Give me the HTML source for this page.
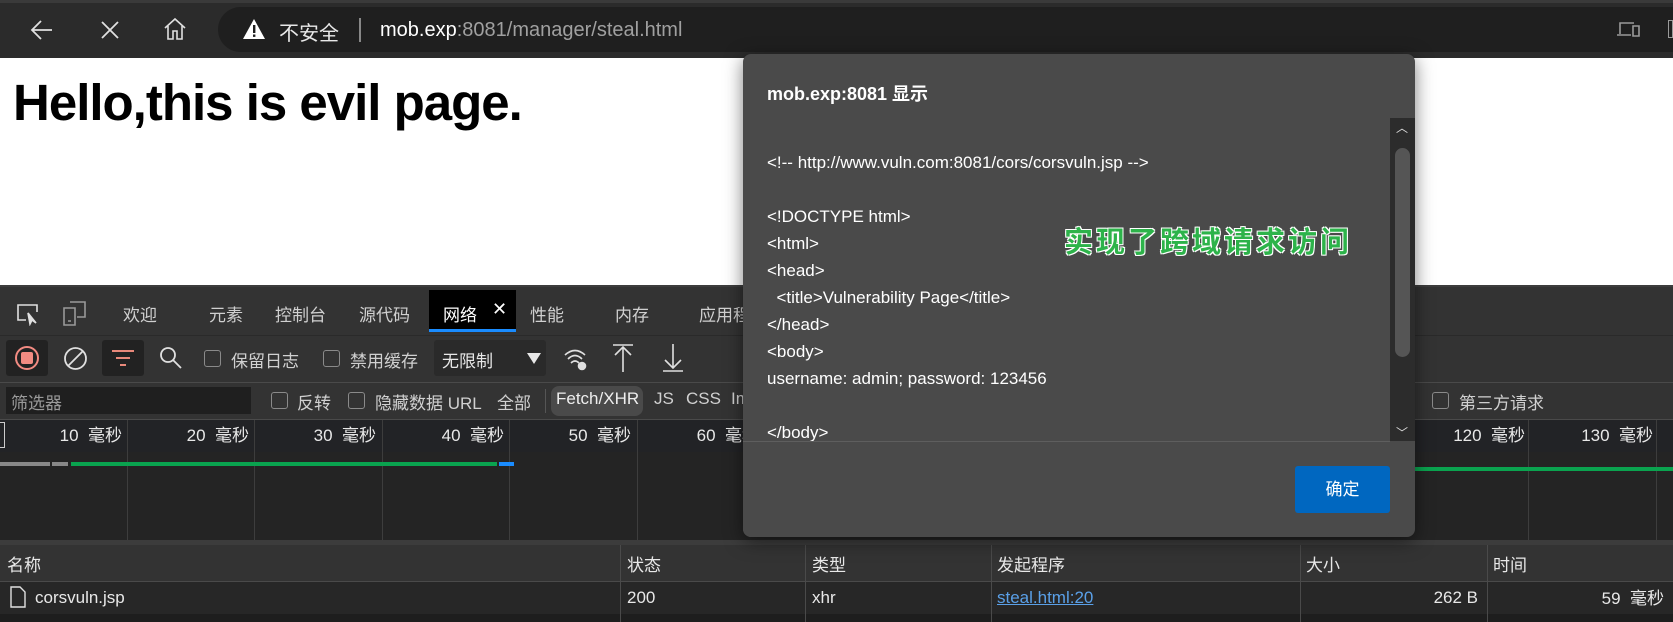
<!DOCTYPE html>
<html><head><meta charset="utf-8"><style>
*{box-sizing:border-box;margin:0;padding:0}
body{width:1673px;height:622px;overflow:hidden;position:relative;background:#fff;font-family:"Liberation Sans","Noto Sans CJK SC",sans-serif;}
.a{position:absolute;white-space:nowrap}
.dt{color:#d0d0d0;font-size:17px}
.cb{position:absolute;width:17px;height:17px;border:1.5px solid #8a8a8a;border-radius:3px}
.vl{position:absolute;width:1px;background:#3d3d3d}
.lbl{position:absolute;top:420px;height:32px;line-height:32px;color:#e8e8e8;font-size:17px;text-align:right;width:120px;white-space:pre}
</style></head><body>
<div class="a" style="left:0;top:0;width:1673px;height:58px;background:#2b2b2b;border-top:3px solid #3a3a3a"></div>
<div class="a" style="left:218px;top:7px;width:1500px;height:45px;background:#1f1f1f;border-radius:23px"></div>
<svg class="a" style="left:28px;top:16px" width="28" height="28" viewBox="0 0 28 28" fill="none" stroke="#e0e0e0" stroke-width="1.8"><path d="M4 14H24M13 5L4 14L13 23"/></svg>
<svg class="a" style="left:98px;top:18px" width="24" height="24" viewBox="0 0 24 24" fill="none" stroke="#e0e0e0" stroke-width="1.8"><path d="M4 4L20 20M20 4L4 20"/></svg>
<svg class="a" style="left:162px;top:16px" width="26" height="26" viewBox="0 0 26 26" fill="none" stroke="#e0e0e0" stroke-width="1.6"><path d="M3 12L13 3L23 12M6 10V23H11V15H15V23H20V10"/></svg>
<svg class="a" style="left:242px;top:18px" width="24" height="22" viewBox="0 0 24 22"><path d="M12 1L23 21H1Z" fill="#fff"/><rect x="11" y="7" width="2.4" height="8" fill="#1f1f1f"/><rect x="11" y="16.5" width="2.4" height="2.4" fill="#1f1f1f"/></svg>
<div class="a" style="left:279px;top:17px;font-size:20px;color:#e8e8e8">不安全</div>
<div class="a" style="left:359px;top:18px;width:2px;height:24px;background:#888"></div>
<div class="a" style="left:380px;top:19px;font-size:20px;color:#fff">mob.exp<span style="color:#a0a0a0">:8081/manager/steal.html</span></div>
<svg class="a" style="left:1617px;top:20px" width="24" height="18" viewBox="0 0 24 18" fill="none" stroke="#9a9a9a" stroke-width="1.6"><path d="M3 14V3H17M0 15H14M16 6H22V16H16Z"/></svg>
<div class="a" style="left:1668px;top:20px;width:5px;height:18px;border:1.5px solid #9a9a9a"></div>
<div class="a" style="left:13px;top:73px;font-size:51px;font-weight:bold;color:#000;letter-spacing:-1px">Hello,this is evil page.</div>
<div class="a" style="left:0;top:285px;width:1673px;height:337px;background:#1e1e1e"></div>
<div class="a" style="left:0;top:285px;width:1673px;height:50px;background:#333;border-top:2px solid #3d3d3d"></div>
<svg class="a" style="left:15px;top:302px" width="25" height="24" viewBox="0 0 25 24" fill="none" stroke="#e0e0e0" stroke-width="1.6"><path d="M11 18H3V3H22V10"/><path d="M13 11L15 22L17 18L21 21Z" fill="#e0e0e0"/></svg>
<svg class="a" style="left:63px;top:300px" width="24" height="26" viewBox="0 0 24 26" fill="none" stroke="#999" stroke-width="1.6"><path d="M7 2H22V17H14M1 8H12V25H1ZM5 21H8"/></svg>
<div class="a dt" style="left:123px;top:301px">欢迎</div>
<div class="a dt" style="left:209px;top:301px">元素</div>
<div class="a dt" style="left:275px;top:301px">控制台</div>
<div class="a dt" style="left:359px;top:301px">源代码</div>
<div class="a" style="left:429px;top:290px;width:87px;height:42px;background:#000;border-bottom:3px solid #1a8cff"></div>
<div class="a dt" style="left:443px;top:301px;color:#fff">网络</div>
<div class="a" style="left:492px;top:299px;color:#fff;font-size:18px">✕</div>
<div class="a dt" style="left:530px;top:301px">性能</div>
<div class="a dt" style="left:615px;top:301px">内存</div>
<div class="a dt" style="left:699px;top:301px">应用程序</div>
<div class="a" style="left:0;top:335px;width:1673px;height:48px;background:#333;border-top:1px solid #2a2a2a;border-bottom:1px solid #4a4a4a"></div>
<div class="a" style="left:6px;top:340px;width:42px;height:36px;background:#222;border-radius:3px"></div>
<div class="a" style="left:15px;top:346px;width:24px;height:24px;border:2px solid #f28b82;border-radius:50%"></div>
<div class="a" style="left:21px;top:352px;width:12px;height:12px;background:#f28b82;border-radius:2px"></div>
<svg class="a" style="left:63px;top:346px" width="25" height="25" viewBox="0 0 25 25" fill="none" stroke="#e0e0e0" stroke-width="1.8"><circle cx="12.5" cy="12.5" r="10.5"/><path d="M5 20L20 5"/></svg>
<div class="a" style="left:102px;top:340px;width:42px;height:36px;background:#222;border-radius:3px"></div>
<div class="a" style="left:112px;top:350px;width:22px;height:2px;background:#e8887a"></div>
<div class="a" style="left:116px;top:357px;width:14px;height:2px;background:#e8887a"></div>
<div class="a" style="left:120px;top:364px;width:6px;height:2px;background:#e8887a"></div>
<svg class="a" style="left:159px;top:346px" width="24" height="24" viewBox="0 0 24 24" fill="none" stroke="#e0e0e0" stroke-width="1.8"><circle cx="9" cy="9" r="7"/><path d="M14 14L22 22"/></svg>
<div class="cb" style="left:204px;top:350px"></div>
<div class="a dt" style="left:231px;top:347px">保留日志</div>
<div class="cb" style="left:323px;top:350px"></div>
<div class="a dt" style="left:350px;top:347px">禁用缓存</div>
<div class="a" style="left:434px;top:340px;width:112px;height:36px;background:#2a2a2a;border-radius:3px"></div>
<div class="a dt" style="left:442px;top:347px;color:#e8e8e8">无限制</div>
<div class="a" style="left:527px;top:353px;border-left:7px solid transparent;border-right:7px solid transparent;border-top:11px solid #e8e8e8"></div>
<svg class="a" style="left:563px;top:346px" width="26" height="26" viewBox="0 0 26 26" fill="none" stroke="#e0e0e0" stroke-width="1.6"><path d="M2 9Q12 0 22 9M5 13Q12 6 19 13M8 17Q12 13 16 17"/><circle cx="19" cy="20" r="3.5" fill="#e0e0e0"/></svg>
<svg class="a" style="left:612px;top:343px" width="22" height="30" viewBox="0 0 22 30" fill="none" stroke="#e0e0e0" stroke-width="1.6"><path d="M1 2H21M11 4V29M3 12L11 4L19 12"/></svg>
<svg class="a" style="left:662px;top:343px" width="22" height="30" viewBox="0 0 22 30" fill="none" stroke="#e0e0e0" stroke-width="1.6"><path d="M1 28H21M11 1V25M3 17L11 25L19 17"/></svg>
<div class="a" style="left:0;top:383px;width:1673px;height:37px;background:#333;border-bottom:1px solid #4a4a4a"></div>
<div class="a" style="left:6px;top:387px;width:245px;height:27px;background:#1f1f1f"></div>
<div class="a" style="left:11px;top:389px;font-size:17px;color:#999">筛选器</div>
<div class="cb" style="left:271px;top:392px"></div>
<div class="a dt" style="left:297px;top:389px">反转</div>
<div class="cb" style="left:348px;top:392px"></div>
<div class="a dt" style="left:375px;top:389px">隐藏数据 URL</div>
<div class="a dt" style="left:497px;top:389px">全部</div>
<div class="a" style="left:545px;top:389px;width:1px;height:24px;background:#555"></div>
<div class="a" style="left:551px;top:386px;width:92px;height:30px;background:#4a4a4a;border-radius:8px"></div>
<div class="a dt" style="left:556px;top:389px;color:#eee">Fetch/XHR</div>
<div class="a dt" style="left:654px;top:389px">JS</div>
<div class="a dt" style="left:686px;top:389px">CSS</div>
<div class="a dt" style="left:731px;top:389px">Img</div>
<div class="cb" style="left:1432px;top:392px"></div>
<div class="a dt" style="left:1459px;top:389px">第三方请求</div>
<div class="a" style="left:0;top:420px;width:1673px;height:32px;background:#222326"></div>
<div class="a" style="left:0;top:452px;width:1673px;height:88px;background:#242424"></div>
<div class="a" style="left:0;top:422px;width:5px;height:26px;border:1px solid #ccc;border-left:none"></div>
<div class="vl" style="left:127px;top:420px;height:120px"></div>
<div class="vl" style="left:254px;top:420px;height:120px"></div>
<div class="vl" style="left:382px;top:420px;height:120px"></div>
<div class="vl" style="left:509px;top:420px;height:120px"></div>
<div class="vl" style="left:637px;top:420px;height:120px"></div>
<div class="vl" style="left:1528px;top:420px;height:120px"></div>
<div class="vl" style="left:1656px;top:420px;height:120px"></div>
<div class="lbl" style="left:2px">10  毫秒</div>
<div class="lbl" style="left:129px">20  毫秒</div>
<div class="lbl" style="left:256px">30  毫秒</div>
<div class="lbl" style="left:384px">40  毫秒</div>
<div class="lbl" style="left:511px">50  毫秒</div>
<div class="lbl" style="left:639px">60  毫秒</div>
<div class="lbl" style="left:1405px">120  毫秒</div>
<div class="lbl" style="left:1533px">130  毫秒</div>
<div class="a" style="left:0;top:462px;width:50px;height:4px;background:#888"></div>
<div class="a" style="left:52px;top:462px;width:16px;height:4px;background:#888"></div>
<div class="a" style="left:71px;top:462px;width:426px;height:4px;background:#0aa34f"></div>
<div class="a" style="left:499px;top:462px;width:15px;height:4px;background:#1a8cff"></div>
<div class="a" style="left:1415px;top:467px;width:258px;height:4px;background:#0aa34f"></div>
<div class="a" style="left:0;top:540px;width:1673px;height:5px;background:#3c3c3c"></div>
<div class="a" style="left:0;top:545px;width:1673px;height:37px;background:#333;border-bottom:1px solid #4a4a4a"></div>
<div class="a" style="left:0;top:582px;width:1673px;height:32px;background:#272727"></div>
<div class="vl" style="left:620px;top:545px;height:77px;background:#4a4a4a"></div>
<div class="vl" style="left:805px;top:545px;height:77px;background:#4a4a4a"></div>
<div class="vl" style="left:991px;top:545px;height:77px;background:#4a4a4a"></div>
<div class="vl" style="left:1300px;top:545px;height:77px;background:#4a4a4a"></div>
<div class="vl" style="left:1487px;top:545px;height:77px;background:#4a4a4a"></div>
<div class="a dt" style="left:7px;top:551px;color:#e8e8e8">名称</div>
<div class="a dt" style="left:627px;top:551px;color:#e8e8e8">状态</div>
<div class="a dt" style="left:812px;top:551px;color:#e8e8e8">类型</div>
<div class="a dt" style="left:997px;top:551px;color:#e8e8e8">发起程序</div>
<div class="a dt" style="left:1306px;top:551px;color:#e8e8e8">大小</div>
<div class="a dt" style="left:1493px;top:551px;color:#e8e8e8">时间</div>
<svg class="a" style="left:10px;top:586px" width="16" height="22" viewBox="0 0 16 22" fill="none" stroke="#e0e0e0" stroke-width="1.4"><path d="M1 1H10L15 6V21H1Z"/></svg>
<div class="a dt" style="left:35px;top:588px;color:#e8e8e8">corsvuln.jsp</div>
<div class="a dt" style="left:627px;top:588px;color:#e8e8e8">200</div>
<div class="a dt" style="left:812px;top:588px;color:#e8e8e8">xhr</div>
<div class="a dt" style="left:997px;top:588px;color:#5aa0e8;text-decoration:underline">steal.html:20</div>
<div class="a dt" style="left:1380px;top:588px;width:98px;text-align:right;color:#e8e8e8">262 B</div>
<div class="a dt" style="left:1500px;top:584px;width:164px;text-align:right;color:#e8e8e8;white-space:pre">59  毫秒</div>
<div class="a" style="left:743px;top:54px;width:672px;height:483px;background:#4a4a4a;border-radius:8px;box-shadow:0 4px 18px rgba(0,0,0,.5)"></div>
<div class="a" style="left:767px;top:80px;font-size:18px;font-weight:bold;color:#fff">mob.exp:8081 显示</div>
<div class="a" style="left:1390px;top:118px;width:25px;height:323px;background:#2c2c2c"></div>
<div class="a" style="left:1395px;top:148px;width:15px;height:209px;background:#555;border-radius:8px"></div>
<div class="a" style="left:1396px;top:119px;font-size:12px;color:#ddd">︿</div>
<div class="a" style="left:1396px;top:424px;font-size:12px;color:#ddd">﹀</div>
<div class="a" style="left:767px;top:149px;font-size:17px;line-height:27px;color:#fff;white-space:pre">&lt;!-- http://www.vuln.com:8081/cors/corsvuln.jsp --&gt;

&lt;!DOCTYPE html&gt;
&lt;html&gt;
&lt;head&gt;
  &lt;title&gt;Vulnerability Page&lt;/title&gt;
&lt;/head&gt;
&lt;body&gt;
username: admin; password: 123456

&lt;/body&gt;</div>
<div class="a" style="left:743px;top:441px;width:647px;height:96px;background:#4a4a4a;border-top:1px solid #5e5e5e;border-radius:0 0 8px 8px"></div>
<div class="a" style="left:1295px;top:466px;width:95px;height:47px;background:#0067c0;border-radius:3px;color:#fff;font-size:17px;text-align:center;line-height:47px">确定</div>
<div class="a" style="left:1064px;top:219px;font-size:29px;font-weight:bold;color:#2db34a;letter-spacing:3px;font-family:'WenQuanYi Zen Hei','Noto Sans CJK SC',sans-serif;text-shadow:1px 1px 0 #fff,-1px -1px 0 #fff,1px -1px 0 #fff,-1px 1px 0 #fff">实现了跨域请求访问</div>
</body></html>
